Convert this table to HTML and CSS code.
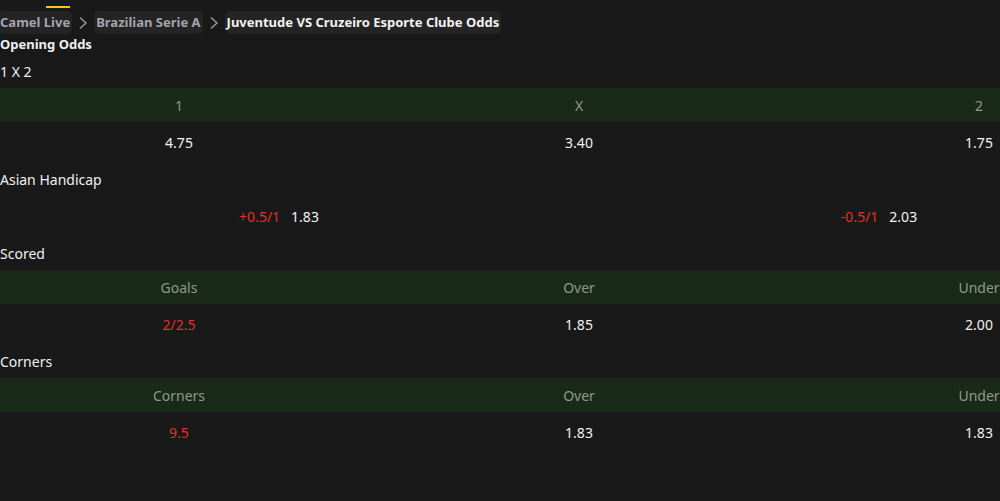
FILE: index.html
```html
<!DOCTYPE html>
<html lang="en">
<head>
<meta charset="utf-8">
<title>Juventude VS Cruzeiro Esporte Clube Odds</title>
<link rel="stylesheet" href="styles.css">
</head>
<body>
<div class="page">
  <div class="top-indicator"></div>
  <nav class="crumbs">
    <a class="crumb">Camel Live</a>
    <svg class="chev" width="8" height="14" viewBox="0 0 8 14"><path d="M1 1.5 L7 7 L1 12.5" fill="none" stroke="#9a9aa0" stroke-width="1.5"/></svg>
    <a class="crumb">Brazilian Serie A</a>
    <svg class="chev" width="8" height="14" viewBox="0 0 8 14"><path d="M1 1.5 L7 7 L1 12.5" fill="none" stroke="#9a9aa0" stroke-width="1.5"/></svg>
    <span class="crumb current">Juventude VS Cruzeiro Esporte Clube Odds</span>
  </nav>
  <h1 class="page-title">Opening Odds</h1>

  <div class="odds">
    <div class="section-title">1 X 2</div>
    <div class="row head three">
      <div class="cell">1</div><div class="cell">X</div><div class="cell">2</div>
    </div>
    <div class="row vals three">
      <div class="cell">4.75</div><div class="cell">3.40</div><div class="cell">1.75</div>
    </div>

    <div class="section-title">Asian Handicap</div>
    <div class="row vals two">
      <div class="cell"><span class="red">+0.5/1</span><span>1.83</span></div>
      <div class="cell"><span class="red">-0.5/1</span><span>2.03</span></div>
    </div>

    <div class="section-title">Scored</div>
    <div class="row head three">
      <div class="cell">Goals</div><div class="cell">Over</div><div class="cell">Under</div>
    </div>
    <div class="row vals three">
      <div class="cell red">2/2.5</div><div class="cell">1.85</div><div class="cell">2.00</div>
    </div>

    <div class="section-title">Corners</div>
    <div class="row head three">
      <div class="cell">Corners</div><div class="cell">Over</div><div class="cell">Under</div>
    </div>
    <div class="row vals three">
      <div class="cell red">9.5</div><div class="cell">1.83</div><div class="cell">1.83</div>
    </div>
  </div>
</div>
</body>
</html>
```

FILE: styles.css
```css
html, body {
  margin: 0;
  padding: 0;
  background: #191919;
  overflow: hidden;
}
body {
  font-family: "Noto Sans", "Open Sans", sans-serif;
  font-size: 14px;
  color: #f0f0f0;
}
.page {
  width: 1000px;
  overflow: hidden;
}
.top-indicator {
  width: 24px;
  height: 2px;
  margin: 6px 0 0 46px;
  background: #f5c518;
}
.crumbs {
  display: flex;
  align-items: center;
  margin: 3px 0 0 -2px;
  height: 23px;
}
.crumb {
  display: block;
  height: 23px;
  line-height: 23px;
  padding: 0 2px;
  border-radius: 5px;
  background: #242424;
  font-size: 13px;
  font-weight: 700;
  color: #a3a5ad;
  text-decoration: none;
}
.crumb.current {
  color: #f2f2f2;
}
.chev {
  display: block;
  margin: 0 7px;
}
.page-title {
  margin: 1px 0 0;
  font-size: 13px;
  font-weight: 700;
  line-height: 19px;
  height: 19px;
}
.odds {
  width: 1200px;
  margin-left: -21px;
}
.section-title {
  height: 34px;
  line-height: 36px;
  padding-left: 21px;
}
.row {
  display: grid;
}
.row.three { grid-template-columns: repeat(3, 1fr); }
.row.two { grid-template-columns: repeat(2, 1fr); }
.row.head {
  height: 34px;
  line-height: 35px;
  background: #1a2a18;
  color: #8f9a8a;
}
.row.vals {
  height: 40px;
  line-height: 41px;
  color: #f2f2f2;
}
.cell {
  text-align: center;
  display: flex;
  justify-content: center;
  gap: 11px;
}
.red {
  color: #e0312b;
}
```
